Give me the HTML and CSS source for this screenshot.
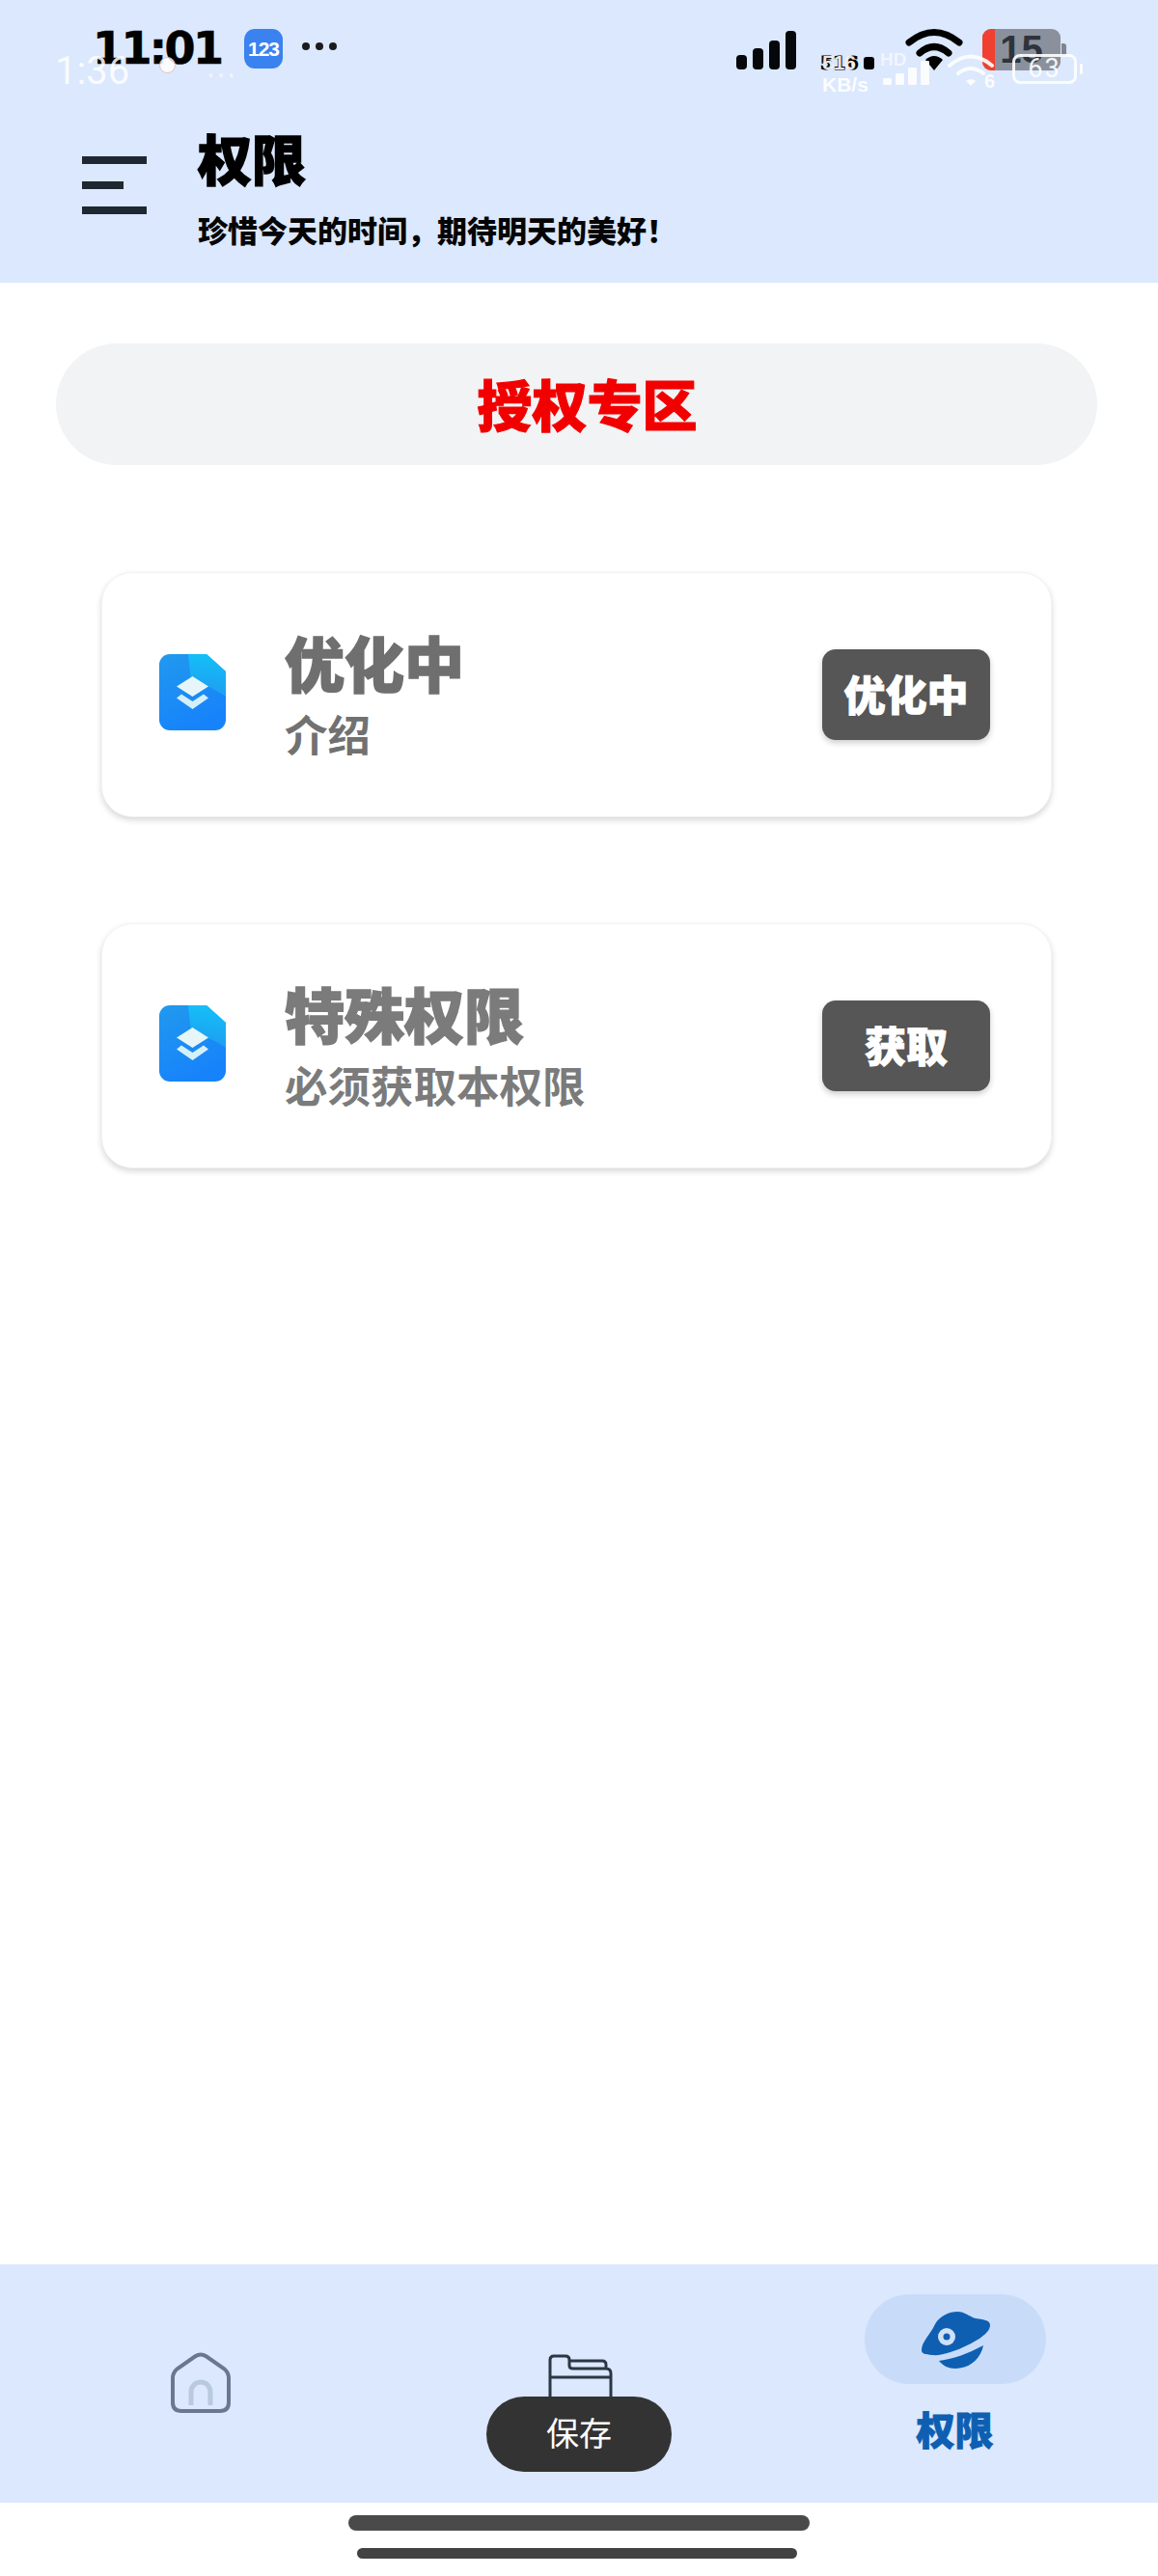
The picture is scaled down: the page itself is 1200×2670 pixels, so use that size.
FILE: index.html
```html
<!DOCTYPE html>
<html lang="zh-CN">
<head>
<meta charset="utf-8">
<title>权限</title>
<link rel="stylesheet" href="styles.css">
</head>
<body>
<div class="page">
  <header class="header">
    <div class="status">
      <div class="status-left">
        <span class="time">11:01</span>
        <span class="app-badge">123</span>
        <span class="dots"><i></i><i></i><i></i></span>
      </div>
      <div class="status-right">
        <span class="signal"><i class="s1"></i><i class="s2"></i><i class="s3"></i><i class="s4"></i></span>
        <span class="net">516<i></i></span>
        <svg class="wifi" viewBox="0 0 60 44"><path d="M4 15 Q30 -6 56 15" fill="none" stroke="#000" stroke-width="7" stroke-linecap="round"/><path d="M15 26 Q30 13 45 26" fill="none" stroke="#000" stroke-width="7" stroke-linecap="round"/><path d="M21 33 Q30 25 39 33 L30 44 Z" fill="#000"/></svg>
        <span class="battery"><span class="battery-body"><i></i><b>15</b></span><span class="battery-tip"></span></span>
      </div>
    </div>
    <div class="ghost">
      <div class="ghost-left"><span class="ghost-time">1:36</span><span class="ghost-mark"></span><span class="ghost-dots">...</span></div>
      <div class="ghost-right">
        <span class="ghost-net">516<br>KB/s</span>
        <span class="ghost-signal"><small>HD</small><i class="g1"></i><i class="g2"></i><i class="g3"></i><i class="g4"></i></span>
        <span class="ghost-wifi-box">
          <svg class="ghost-wifi" viewBox="0 0 50 36"><path d="M3 13 Q25 -6 47 13" fill="none" stroke="#fff" stroke-width="4" stroke-linecap="round"/><path d="M12 21 Q25 11 38 21" fill="none" stroke="#fff" stroke-width="4" stroke-linecap="round"/><path d="M20 29 Q25 25 30 29 L25 34 Z" fill="#fff"/></svg>
          <small>6</small>
        </span>
        <span class="ghost-battery"><span>63</span></span><span class="ghost-tip"></span>
      </div>
    </div>
    <div class="head-row">
      <div class="menu"><i class="long"></i><i class="short"></i><i class="long"></i></div>
      <div class="head-text">
        <h1 class="title">权限</h1>
        <p class="subtitle">珍惜今天的时间&#xFF0C;期待明天的美好&#xFF01;</p>
      </div>
    </div>
  </header>

  <main class="main">
    <div class="zone">授权专区</div>
    <section class="cards">
      <article class="card">
        <svg class="doc" viewBox="0 0 69 79"><defs><linearGradient id="d1" x1="0" y1="0" x2="0.4" y2="1"><stop offset="0" stop-color="#2199ee"/><stop offset="1" stop-color="#1783fb"/></linearGradient><linearGradient id="d2" x1="0.6" y1="0" x2="0.5" y2="1"><stop offset="0" stop-color="#14c0f8"/><stop offset="1" stop-color="#1e9cf0"/></linearGradient></defs><path d="M11 0H49L69 18V68A11 11 0 0 1 58 79H11A11 11 0 0 1 0 68V11A11 11 0 0 1 11 0Z" fill="url(#d1)"/><path d="M30 0H49L69 18V44Q48 30 33 29Z" fill="url(#d2)"/><path d="M34.5 23L51 33.5L34.5 44L18 33.5Z" fill="#e6f6f8"/><path d="M23 41.5L34.5 49L46 41.5L51 45.500L34.500 57L18 45.500Z" fill="#d5eff8"/></svg>
        <div class="card-text">
          <h2 class="card-title">优化中</h2>
          <p class="card-sub">介绍</p>
        </div>
        <button class="action">优化中</button>
      </article>
      <article class="card">
        <svg class="doc" viewBox="0 0 69 79"><path d="M11 0H49L69 18V68A11 11 0 0 1 58 79H11A11 11 0 0 1 0 68V11A11 11 0 0 1 11 0Z" fill="url(#d1)"/><path d="M30 0H49L69 18V44Q48 30 33 29Z" fill="url(#d2)"/><path d="M34.5 23L51 33.5L34.5 44L18 33.5Z" fill="#e6f6f8"/><path d="M23 41.5L34.5 49L46 41.5L51 45.500L34.500 57L18 45.500Z" fill="#d5eff8"/></svg>
        <div class="card-text">
          <h2 class="card-title light">特殊权限</h2>
          <p class="card-sub light">必须获取本权限</p>
        </div>
        <button class="action">获取</button>
      </article>
    </section>
  </main>

  <nav class="nav">
    <div class="nav-item">
      <svg class="home" viewBox="0 0 62 63"><path d="M25 4.500Q31 0.500 37 4.500L55 17Q60 21 60 27V52Q60 61 51 61H11Q2 61 2 52V27Q2 21 7 17Z" fill="none" stroke="#6a788f" stroke-width="4"/><path d="M21 55V41A10 10 0 0 1 41 41V55" fill="none" stroke="#b9c9de" stroke-width="5"/></svg>
    </div>
    <div class="nav-item">
      <svg class="folder" viewBox="0 0 67 46"><path d="M2 46V6Q2 2 6 2H18Q22 2 22 6V12Q22 15 26 15H60Q65 15 65 20V46M2 24H65M22 7H56Q60 7 60 11V15" fill="none" stroke="#2b3744" stroke-width="3"/></svg>
    </div>
    <div class="nav-item active">
      <span class="nav-pill">
        <svg class="planet" viewBox="0 0 72 59"><path d="M1 40C1 31 10 24 15 13C20 4 30 0 38 0C46 0 50 5 57 7C63 8 72 8 72 14C72 22 60 29 48 35C36 41 22 46 12 45C5 44 1 44 1 40Z" fill="#0e5fb2"/><path d="M19 51C35 49 50 43 65 35C62 50 50 59 36 59C29 59 23 56 19 51Z" fill="#0e5fb2"/><circle cx="27" cy="26" r="9" fill="#cfe0f8"/><circle cx="27" cy="26" r="3.500" fill="#0e5fb2"/></svg>
      </span>
      <span class="nav-label">权限</span>
    </div>
  </nav>
  <div class="toast">保存</div>

  <footer class="home-bars">
    <i class="bar-a"></i>
    <i class="bar-b"></i>
  </footer>
</div>
</body>
</html>
```

FILE: styles.css
```css
* { box-sizing: border-box; }
html, body { margin: 0; padding: 0; background: #fff; }
body { font-family: "Noto Sans CJK SC", "Noto Sans", sans-serif; }
i { display: block; }
h1, h2, p { margin: 0; }

.page { position: relative; width: 1200px; height: 2670px; display: flex; flex-direction: column; overflow: hidden; }

.header { position: relative; height: 293px; background: #dbe8fd; padding: 28px 95px 0 85px; flex: none; }
.status { display: flex; justify-content: space-between; align-items: flex-start; height: 45px; }
.status-left { display: flex; align-items: center; padding-left: 11px; height: 44px; }
.time { width: 134px; font: 800 46px/44px "DejaVu Sans", sans-serif; color: #000; letter-spacing: -2.6px; -webkit-text-stroke: .6px #000; white-space: nowrap; }
.app-badge { width: 40px; height: 41px; margin-left: 23px; border-radius: 11px; background: #3a82ef; color: #fff; font: 700 21px/41px "Liberation Sans", sans-serif; letter-spacing: -1px; text-align: center; }
.dots { display: flex; gap: 6px; margin-left: 20px; margin-top: -4px; }
.dots i { width: 8px; height: 8px; border-radius: 50%; background: #1b1b1b; }

.status-right { display: flex; align-items: flex-end; height: 45px; }
.signal { display: flex; align-items: flex-end; gap: 6px; height: 40px; width: 64px; margin-bottom: 1px; }
.signal i { width: 11px; background: #05070b; border-radius: 4px; }
.s1 { height: 15px; } .s2 { height: 22px; } .s3 { height: 30px; } .s4 { height: 40px; }
.net { display: flex; align-items: center; gap: 5px; width: 65px; margin: 0 23px; font: 700 19px/16px "DejaVu Sans", sans-serif; color: #000; -webkit-text-stroke: 1px #000; }
.net i { width: 11px; height: 13px; border-radius: 3px; background: #000; }
.wifi { width: 60px; height: 44px; }
.battery { display: flex; align-items: center; margin-left: 20px; height: 44px; }
.battery-body { position: relative; width: 81px; height: 43px; background: #8b919c; border-radius: 9px; text-align: center; }
.battery-body i { position: absolute; left: 0; top: 0; bottom: 0; width: 13px; background: #f0402f; border-radius: 9px 0 0 9px; }
.battery-body b { position: relative; display: block; font: 700 40px/43px "Liberation Sans", sans-serif; color: #2e343d; }
.battery-tip { width: 5px; height: 13px; background: #7f8590; border-radius: 0 3px 3px 0; margin-left: 1px; }

.ghost { position: absolute; left: 57px; right: 78px; top: 52px; height: 44px; display: flex; justify-content: space-between; color: #fff; }
.ghost-left { display: flex; align-items: center; opacity: .85; }
.ghost-time { font: 400 40px/44px "Roboto", sans-serif; width: 76px; }
.ghost-mark { width: 17px; height: 17px; margin-left: 32px; margin-top: -14px; background: #fff; border-radius: 50%; border: 1px solid #e9b9b9; }
.ghost-dots { font: 700 24px/20px "Liberation Sans", sans-serif; margin-left: 33px; margin-top: -4px; letter-spacing: 4px; opacity: .7; }
.ghost-right { display: flex; align-items: flex-start; opacity: .9; }
.ghost-net { width: 60px; margin-top: 1px; font: 700 21px/23px "Liberation Sans", sans-serif; }
.ghost-signal { position: relative; display: flex; align-items: flex-end; gap: 4px; width: 52px; height: 36px; margin-left: 3px; }
.ghost-signal small { position: absolute; left: -3px; top: 1px; font: 700 19px/18px "Liberation Sans", sans-serif; opacity: .7; }
.ghost-signal i { width: 9px; background: #fff; border-radius: 1px; }
.g1 { height: 7px; } .g2 { height: 12px; } .g3 { height: 18px; } .g4 { height: 25px; }
.ghost-wifi-box { position: relative; width: 50px; height: 40px; margin-left: 14px; margin-top: 3px; }
.ghost-wifi { display: block; width: 50px; height: 36px; }
.ghost-wifi-box small { position: absolute; right: 0; top: 18px; font: 700 20px/22px "Liberation Sans", sans-serif; }
.ghost-battery { width: 67px; height: 31px; margin-left: 18px; margin-top: 4px; border: 3px solid #fff; border-radius: 8px; text-align: center; font: 400 27px/25px "Roboto", sans-serif; letter-spacing: 2px; }
.ghost-tip { width: 3px; height: 11px; margin: 14px 0 0 3px; background: #fff; border-radius: 0 2px 2px 0; }

.head-row { display: flex; align-items: flex-start; margin-top: 62px; }
.menu { display: flex; flex-direction: column; gap: 18px; width: 67px; margin-top: 27px; }
.menu i { height: 8px; background: #1f2730; }
.menu .long { width: 67px; }
.menu .short { width: 43px; }
.head-text { margin-left: 53px; margin-top: -1px; }
.title { font-size: 56px; line-height: 58px; font-weight: 900; color: #000; -webkit-text-stroke: 1.5px #000; }
.subtitle { margin-top: 30px; font-size: 31px; line-height: 32px; font-weight: 900; color: #050505; white-space: nowrap; }

.main { flex: 1; padding: 63px 63px 0 58px; }
.zone { height: 126px; padding-left: 22px; border-radius: 63px; background: #f2f3f5; color: #f20000; font-size: 57px; line-height: 122px; font-weight: 900; text-align: center; -webkit-text-stroke: 1.2px #f20000; }
.cards { display: flex; flex-direction: column; gap: 110px; margin: 111px -16px 0 47px; }
.card { display: flex; align-items: center; width: 985px; height: 254px; padding: 0 63px 0 59px; border-radius: 32px; background: #fff; border: 1px solid #f3f3f3; box-shadow: 0 3px 6px rgba(0,0,0,.16); }
.doc { width: 69px; height: 79px; flex: none; margin-top: -5px; }
.card-text { flex: 1; margin-top: -5px; margin-left: 61px; }
.card-title { font-size: 62px; line-height: 64px; font-weight: 900; color: #6f6f6f; -webkit-text-stroke: 1.5px #6f6f6f; }
.card-sub { margin-top: 20px; font-size: 44.500px; line-height: 44px; font-weight: 700; color: #717171; }
.card-title.light { color: #7b7b7b; -webkit-text-stroke-color: #7b7b7b; }
.card-sub.light { color: #7b7b7b; }
.action { width: 174px; height: 94px; flex: none; padding: 0 0 5px; border: 0; border-radius: 14px; background: #565656; color: #fff; font: 900 43px/84px "Noto Sans CJK SC", sans-serif; -webkit-text-stroke: 1px #fff; box-shadow: 0 3px 6px rgba(0,0,0,.2); }

.nav { flex: none; height: 247px; background: #dbe8fd; display: grid; grid-template-columns: 405px 400px 1fr; }
.nav-item { position: relative; display: flex; flex-direction: column; align-items: center; }
.home { width: 62px; height: 63px; margin: 91px 0 0 10px; }
.folder { width: 67px; height: 46px; margin: 93px 0 0 -7px; }
.nav-item.active { padding-top: 31px; padding-right: 26px; }
.nav-pill { display: flex; align-items: center; justify-content: center; width: 188px; height: 93px; border-radius: 47px; background: #c8dcf9; }
.planet { width: 72px; height: 59px; margin-top: 2px; }
.nav-label { margin-top: 21px; font-size: 40px; line-height: 50px; font-weight: 900; color: #0e5fb2; -webkit-text-stroke: 1px #0e5fb2; }

.toast { position: absolute; left: 504px; top: 2484px; width: 192px; height: 78px; border-radius: 39px; background: #333; color: #fff; font-size: 34px; line-height: 74px; text-align: center; }

.home-bars { flex: none; height: 76px; display: flex; flex-direction: column; align-items: center; padding-top: 13px; }
.bar-a { width: 478px; height: 16px; border-radius: 8px; background: #4a4a4a; margin-left: -1px; }
.bar-b { width: 456px; height: 11px; border-radius: 6px; background: #424242; margin-top: 18px; margin-left: -5px; }
```
